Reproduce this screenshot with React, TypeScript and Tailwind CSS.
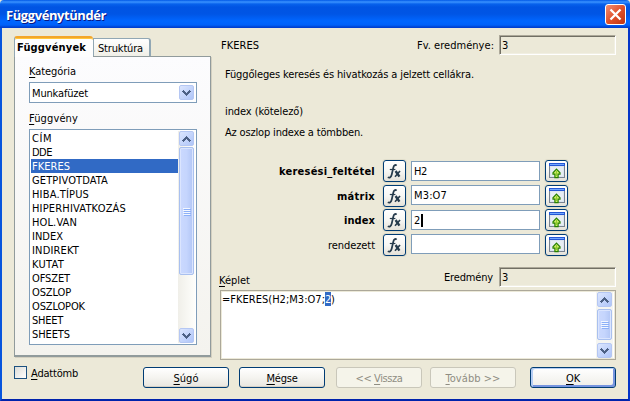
import { useLayoutEffect, useRef } from "react";
import type { ReactNode } from "react";

const functions: [string, number][] = [
  ["CÍM", 20], ["DDE", 20], ["FKERES", 38], ["GETPIVOTDATA", 76], ["HIBA.TÍPUS", 57],
  ["HIPERHIVATKOZÁS", 94], ["HOL.VAN", 45], ["INDEX", 31], ["INDIREKT", 47], ["KUTAT", 32],
  ["OFSZET", 38], ["OSZLOP", 39], ["OSZLOPOK", 53], ["SHEET", 31], ["SHEETS", 38],
];

/* Text whose letter spacing is adjusted so that it fills a given width. */
function Text({ w, className = "", children }: { w: number; className?: string; children: ReactNode }) {
  const ref = useRef<HTMLSpanElement>(null);
  useLayoutEffect(() => {
    const el = ref.current;
    if (!el) return;
    el.style.letterSpacing = "0px";
    const n = (el.textContent || "").length;
    el.style.letterSpacing = `${(w - el.getBoundingClientRect().width) / n}px`;
  }, [w]);
  return (
    <div className={`w-fit ${className}`}>
      <span ref={ref} className="-mb-px block w-fit pt-px whitespace-pre">{children}</span>
    </div>
  );
}

function Key({ children }: { children: ReactNode }) {
  return <span className="underline decoration-1 underline-offset-[2px]">{children}</span>;
}

function Arrow({ up = false }: { up?: boolean }) {
  return (
    <div className="flex h-[15px] w-[15px] shrink-0 items-center justify-center rounded-[2px] border border-[#b5c7f3] bg-linear-to-br from-[#dce6fe] to-[#afc5f8]">
      <svg width="9" height="6" viewBox="0 0 9 6" className={up ? "rotate-180" : ""} shapeRendering="crispEdges">
        <path d="M0 1h1V0h1v1h1v1h1v1h1V2h1V1h1V0h1v1h1v1H8v1H7v1H6v1H5v1H4V5H3V4H2V3H1V2H0z" fill="#4d6185" />
      </svg>
    </div>
  );
}

function Thumb({ className }: { className: string }) {
  return (
    <div className={`flex w-[15px] shrink-0 flex-col items-center justify-center gap-px rounded-[2px] border border-[#a9c0ef] bg-linear-to-r from-[#cbd9fe] via-[#c5d5fd] to-[#b2c6f5] shadow-[inset_0_0_0_1px_#dbe5fe] ${className}`}>
      {[0, 1, 2, 3].map((i) => (
        <div key={i} className="h-px w-[7px] bg-[#f3f7ff] shadow-[1px_1px_0_#8cb0f8]" />
      ))}
    </div>
  );
}

function Sunken({ className = "" }: { className?: string }) {
  return (
    <div className={`h-5 w-[117px] border border-t-[#aca899] border-r-white border-b-white border-l-[#aca899] pt-[2px] pl-[2px] shadow-[inset_1px_1px_0_#716f64,inset_-1px_-1px_0_#f1efe2] ${className}`}>
      <Text w={7}>3</Text>
    </div>
  );
}

function IconButton({ children }: { children: ReactNode }) {
  return (
    <div className="flex h-[22px] w-[23px] items-center justify-center rounded-[3px] border border-[#003c74] bg-linear-to-b from-white via-[#f7f7f4] to-[#e4e1d8] shadow-[0_0_0_1px_#dfdcca]">
      {children}
    </div>
  );
}

function FxIcon() {
  return (
    <svg width="17" height="18" viewBox="0 0 17 18" fill="none" stroke="#263b4c">
      <path d="M10.6 3.6C9.2 2.2 7.9 3.4 7.4 5.4L5.7 12.6c-.6 2.6-2 3.6-3.9 2.6" strokeWidth="1.8" />
      <path d="M3.8 7.5h5.6" strokeWidth="1.2" />
      <path d="M9.6 9l3.8 5.6" strokeWidth="2.4" />
      <path d="M14 9l-5 5.8" strokeWidth="1.6" />
    </svg>
  );
}

function ShrinkIcon() {
  return (
    <svg width="16" height="16" viewBox="0 0 16 16">
      <rect width="16" height="15" fill="#788391" />
      <rect x="1" y="3" width="14" height="11" fill="#dce5f0" />
      <rect x="2" y="4" width="12" height="9" fill="#e7edf3" />
      <rect width="16" height="3" fill="#2457d5" />
      <rect x="1" y="1" width="14" height="1" fill="#72a7ff" />
      <path d="M7.5 6.2L11 9.8v1.4H9.1v3.4H5.9v-3.4H4V9.8z" fill="#d0ed65" stroke="#278000" strokeWidth="1.2" />
      <path d="M7.5 8v5" stroke="#8ed029" />
    </svg>
  );
}

function Row({ label, w, bold, value, vw = 0, caret, className }: { label: string; w: number; bold?: boolean; value: string; vw?: number; caret?: boolean; className: string }) {
  return (
    <div className={`flex h-[22px] shrink-0 ${className}`}>
      <div className={`mr-2 flex w-[155px] items-center justify-end ${bold ? "font-bold" : ""}`}>
        <Text w={w}>{label}</Text>
      </div>
      <IconButton><FxIcon /></IconButton>
      <div className={`mr-[5px] ml-[5px] flex h-5 w-[129px] items-center border border-[#7f9db9] bg-white pl-[2px] ${caret || label === "keresési_feltétel" ? "mt-px" : ""}`}>
        {value && <Text w={vw}>{value}</Text>}
        {caret && <div className="h-[13px] w-[2px] bg-black" />}
      </div>
      <IconButton><ShrinkIcon /></IconButton>
    </div>
  );
}

function Button({ className = "", disabled, primary, children }: { className?: string; disabled?: boolean; primary?: boolean; children: ReactNode }) {
  const look = disabled
    ? "border-[#c9c7ba] bg-[#f5f4ea] text-[#8f8d82]"
    : primary
      ? "border-[#003c74] bg-linear-to-b from-white to-[#efeee8] shadow-[inset_2px_1px_0_#b5cdf3,inset_-2px_-2px_0_#7795df]"
      : "border-[#003c74] bg-linear-to-b from-white via-[#f5f4f0] to-[#e8e6df] shadow-[inset_0_-1px_0_#d6d0c5]";
  return <div className={`flex h-[21px] w-[86px] items-center justify-center rounded-[3px] border ${look} ${className}`}>{children}</div>;
}

export default function App() {
  return (
    <div className="flex h-[401px] w-[630px] flex-col overflow-hidden bg-[#ece9d8] font-['DejaVu_Sans_Condensed','DejaVu_Sans',sans-serif] text-[11px] leading-[14px] text-black [font-stretch:condensed]">
      <header className="flex h-7 shrink-0 items-start justify-between rounded-t-[4px] bg-[linear-gradient(#0058e6_0,#3a93ff_2px,#0762ec_4px,#0054e3_7px,#0055e5_14px,#0066ff_21px,#0061fa_25px,#0044d3_27px,#003bcf_28px)] pr-[4px] pl-[6px]">
        <Text w={100} className="mt-[5px] font-['Open_Sans',sans-serif] text-[13px] leading-[18px] font-bold text-white [font-stretch:normal] [text-shadow:1px_1px_0_#0a1883]">Függvénytündér</Text>
        <div className="mt-[4px] flex h-[21px] w-[21px] items-center justify-center rounded-[3px] border border-white bg-linear-to-br from-[#ef8d72] via-[#e0512b] to-[#bf3410]">
          <svg width="13" height="13" viewBox="0 0 13 13"><path d="M1.5 1.5l10 10m0-10l-10 10" stroke="white" strokeWidth="2.3" /></svg>
        </div>
      </header>

      <main className="flex min-h-0 flex-1 flex-col border-x-2 border-b-2 border-l-[#0855dd] border-r-[#0434c8] border-b-[#0023ac]">
        <div className="flex h-[332px] shrink-0 pl-3">
          <aside className="flex w-[197px] shrink-0 flex-col pt-2">
            <div className="z-10 flex h-[21px] shrink-0 items-start">
              <div className="h-[21px] w-[79px] rounded-t-[3px] border-t-2 border-l border-t-[#f3a62b] border-l-[#91a7b4] bg-[#fefefe] pt-[2px] pl-[2px] font-bold shadow-[inset_0_1px_0_#ffc73c]">
                <Text w={69}>Függvények</Text>
              </div>
              <div className="mt-[2px] h-[18px] w-[58px] rounded-tr-[3px] border-t border-r-2 border-l border-t-[#91a7b4] border-r-[#91a7b4] border-l-[#91a7b4] bg-linear-to-b from-white to-[#f0efe7] pt-[2px] pl-1">
                <Text w={45}>Struktúra</Text>
              </div>
            </div>
            <section className="-mt-px flex h-[301px] shrink-0 flex-col border border-b-2 border-[#919b9c] bg-linear-to-b from-[#fcfcfe] to-[#f4f3ee] pl-[14px] shadow-[1px_1px_0_#d4d0c0]">
              <div className="mt-[7px] h-[18px]"><Text w={47}><Key>K</Key>ategória</Text></div>
              <div className="flex h-[21px] w-[168px] items-center justify-between border border-[#7f9db9] bg-white pr-[2px] pl-[2px]">
                <Text w={56}>Munkafüzet</Text>
                <Arrow />
              </div>
              <div className="mt-2 h-[18px]"><Text w={49}><Key>F</Key>üggvény</Text></div>
              <div className="flex h-[216px] w-[168px] border border-[#7f9db9] bg-white p-px">
                <ul className="w-[147px]">
                  {functions.map(([name, w]) => (
                    <li key={name} className={`h-[14px] pl-px ${name === "FKERES" ? "bg-[#316ac5] text-white" : ""}`}>
                      <Text w={w}>{name}</Text>
                    </li>
                  ))}
                </ul>
                <div className="flex h-[212px] w-[17px] flex-col items-center bg-linear-to-r from-[#f0efe9] to-[#fefefb]">
                  <Arrow up />
                  <Thumb className="mt-px h-[128px]" />
                  <div className="mt-auto"><Arrow /></div>
                </div>
              </div>
            </section>
          </aside>

          <section className="ml-[9px] flex w-[396px] flex-col pt-[7px]">
            <div className="flex h-5 items-start">
              <Text w={38} className="mt-[3px] ml-px">FKERES</Text>
              <Text w={77} className="mt-[3px] ml-auto">Fv. eredménye:</Text>
              <Sunken className="ml-[5px]" />
            </div>
            <div className="mt-3 pl-[5px]"><Text w={249}>Függőleges keresés és hivatkozás a jelzett cellákra.</Text></div>
            <div className="mt-[23px] pl-[5px]"><Text w={78}>index (kötelező)</Text></div>
            <div className="mt-[7px] pl-[5px]"><Text w={138}>Az oszlop indexe a tömbben.</Text></div>
            <div className="mt-[21px] flex shrink-0 flex-col">
              <Row label="keresési_feltétel" w={96} bold value="H2" vw={13} className="" />
              <Row label="mátrix" w={38} bold value="M3:O7" vw={33} className="mt-[3px]" />
              <Row label="index" w={31} bold value="2" vw={7} caret className="mt-[2px]" />
              <Row label="rendezett" w={47} value="" className="mt-[3px]" />
            </div>
            <div className="mt-[11px] flex h-[23px] shrink-0 items-start">
              <Text w={31} className="mt-[6px] -ml-px"><Key>K</Key>éplet</Text>
              <Text w={49} className="mt-[3px] ml-auto">Eredmény</Text>
              <Sunken className="ml-[6px]" />
            </div>
            <div className="flex h-[70px] shrink-0 justify-between border border-[#aca899] bg-white pr-[2px] shadow-[inset_0_0_0_1px_#ece9d8]">
              <div className="flex h-4 pt-px pl-px">
                <Text w={103}>=FKERES(H2;M3:O7;</Text>
                <Text w={6} className="h-[14px] bg-[#316ac5] text-white">2</Text>
                <Text w={4}>)</Text>
              </div>
              <div className="mt-px flex h-[66px] w-[17px] flex-col items-center bg-[#f5f5f1]">
                <Arrow up />
                <Thumb className="mt-[2px] h-[31px]" />
                <div className="mt-auto"><Arrow /></div>
              </div>
            </div>
          </section>
        </div>
        <footer className="flex items-start pt-[6px] pl-3">
          <div className="h-[13px] w-[13px] border border-[#1c5180] bg-linear-to-br from-[#dcdcd7] to-white" />
          <Text w={47} className="ml-1"><Key>A</Key>dattömb</Text>
          <Button className="mt-px ml-[65px]"><Text w={25}><Key>S</Key>úgó</Text></Button>
          <Button className="mt-px ml-[10px]"><Text w={31}><Key>M</Key>égse</Text></Button>
          <Button disabled className="mt-px ml-[11px]"><Text w={47}>{"<< "}<Key>V</Key>issza</Text></Button>
          <Button disabled className="mt-px ml-[8px]"><Text w={55}><Key>T</Key>{"ovább >>"}</Text></Button>
          <Button primary className="mt-px ml-[14px]"><Text w={14}><Key>O</Key>K</Text></Button>
        </footer>
      </main>
    </div>
  );
}
